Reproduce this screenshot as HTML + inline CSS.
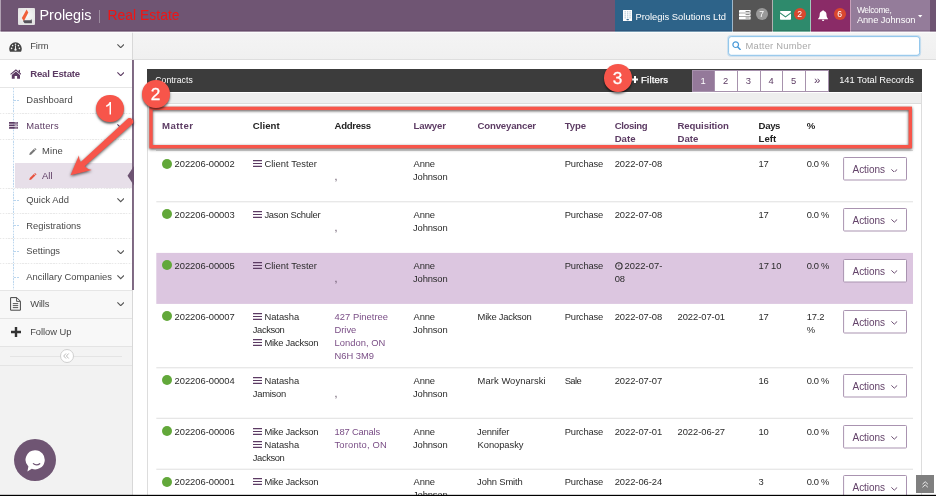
<!DOCTYPE html>
<html><head><meta charset="utf-8"><title>Prolegis - Real Estate</title>
<style>
html,body{margin:0;padding:0;}
body{width:936px;height:496px;overflow:hidden;position:relative;background:#fff;
font-family:"Liberation Sans",sans-serif;}
.b{position:absolute;display:block;}
.t{position:absolute;white-space:nowrap;display:block;}
#pg{position:absolute;left:0;top:0;width:936px;height:496px;overflow:hidden;will-change:transform;}
</style></head>
<body>
<div id="pg">
<div class="b" style="left:0.00px;top:0.00px;width:936.00px;height:32.00px;background:#6f5573;"></div>
<div class="b" style="left:17.80px;top:7.90px;width:17.25px;height:17.20px;background:radial-gradient(circle at 50% 45%,#fafafa 0%,#e6e6e6 70%,#dcdcdc 100%);border-radius:1px;"></div>
<svg class="b" style="left:17.80px;top:7.90px;" width="17.25" height="17.2" viewBox="0 0 17.25 17.2"><path d="M8.6 1.4 L10.3 4.5 L5.9 13.2 L3.8 9.9 Z" fill="#f0603a"/><path d="M5.6 12.3 H12.6 L13.2 11.1 L13.9 12.4 V15.3 H6.6 L5.2 13.4 Z" fill="#55525a"/></svg>
<span class="t" style="left:39.50px;top:6.30px;font-size:14.4px;line-height:18px;color:#fff;">Prolegis</span>
<div class="b" style="left:99.00px;top:9.60px;width:1.00px;height:13.40px;background:#9b8b9e;"></div>
<span class="t" style="left:107.50px;top:6.30px;font-size:13.9px;line-height:18px;color:#f01414;letter-spacing:0.017px;">Real Estate</span>
<div class="b" style="left:615.00px;top:0.00px;width:117.50px;height:32.00px;background:#2d6389;"></div>
<div class="b" style="left:732.50px;top:0.00px;width:40.00px;height:32.00px;background:#555555;"></div>
<div class="b" style="left:772.50px;top:0.00px;width:38.00px;height:32.00px;background:#2e8a6c;"></div>
<div class="b" style="left:810.50px;top:0.00px;width:40.00px;height:32.00px;background:#8a2b67;"></div>
<div class="b" style="left:850.50px;top:0.00px;width:79.00px;height:32.00px;background:#947c9a;"></div>
<div class="b" style="left:732.00px;top:0.00px;width:0.80px;height:32.00px;background:rgba(255,255,255,0.55);"></div>
<div class="b" style="left:772.30px;top:0.00px;width:0.80px;height:32.00px;background:rgba(255,255,255,0.55);"></div>
<div class="b" style="left:810.30px;top:0.00px;width:0.80px;height:32.00px;background:rgba(255,255,255,0.55);"></div>
<div class="b" style="left:850.30px;top:0.00px;width:0.80px;height:32.00px;background:rgba(255,255,255,0.55);"></div>
<svg class="b" style="left:622.80px;top:9.80px;" width="9.4" height="11.4" viewBox="0 0 9.4 11.4"><rect x="0" y="0" width="9.4" height="11.4" rx="0.3" fill="#fff"/><rect x="1.50" y="1.30" width="1.4" height="1.1" fill="#2d6389" opacity="0.38"/><rect x="1.50" y="3.30" width="1.4" height="1.1" fill="#2d6389" opacity="0.38"/><rect x="1.50" y="5.30" width="1.4" height="1.1" fill="#2d6389" opacity="0.38"/><rect x="1.50" y="7.30" width="1.4" height="1.1" fill="#2d6389" opacity="0.38"/><rect x="3.95" y="1.30" width="1.4" height="1.1" fill="#2d6389" opacity="0.38"/><rect x="3.95" y="3.30" width="1.4" height="1.1" fill="#2d6389" opacity="0.38"/><rect x="3.95" y="5.30" width="1.4" height="1.1" fill="#2d6389" opacity="0.38"/><rect x="3.95" y="7.30" width="1.4" height="1.1" fill="#2d6389" opacity="0.38"/><rect x="6.40" y="1.30" width="1.4" height="1.1" fill="#2d6389" opacity="0.38"/><rect x="6.40" y="3.30" width="1.4" height="1.1" fill="#2d6389" opacity="0.38"/><rect x="6.40" y="5.30" width="1.4" height="1.1" fill="#2d6389" opacity="0.38"/><rect x="6.40" y="7.30" width="1.4" height="1.1" fill="#2d6389" opacity="0.38"/><rect x="3.4" y="8.9" width="2.6" height="1.3" rx="0.6" fill="#2d6389" opacity="0.9"/></svg>
<span class="t" style="left:635.40px;top:9.80px;font-size:9.4px;line-height:13.0px;color:#fff;">Prolegis Solutions Ltd</span>
<svg class="b" style="left:739.30px;top:10.40px;" width="11.6" height="9.4" viewBox="0 0 11.6 9.4"><rect x="0" y="0.00" width="11.6" height="2.8" rx="0.5" fill="#fff"/><rect x="6.6" y="1.05" width="4" height="0.7" fill="#555"/><rect x="0" y="3.30" width="11.6" height="2.8" rx="0.5" fill="#fff"/><rect x="6.6" y="4.35" width="4" height="0.7" fill="#555"/><rect x="0" y="6.60" width="11.6" height="2.8" rx="0.5" fill="#fff"/><rect x="6.6" y="7.65" width="4" height="0.7" fill="#555"/></svg>
<div class="b" style="left:755.70px;top:7.80px;width:12.00px;height:12.00px;background:#999;border-radius:50%;"></div>
<span class="t" style="left:759.30px;top:7.60px;font-size:8.6px;line-height:13.0px;color:#fff;">7</span>
<svg class="b" style="left:780.00px;top:11.30px;" width="11" height="8.7" viewBox="0 0 11 8.7"><path d="M0 0.8 a0.8 0.8 0 0 1 0.8 -0.8 h9.4 a0.8 0.8 0 0 1 0.8 0.8 v0.4 l-5.5 4 l-5.5 -4 z" fill="#fff"/><path d="M0 2.5 l5.5 4 l5.5 -4 v5.4 a0.8 0.8 0 0 1 -0.8 0.8 h-9.4 a0.8 0.8 0 0 1 -0.8 -0.8 z" fill="#fff"/></svg>
<div class="b" style="left:793.60px;top:7.80px;width:12.00px;height:12.00px;background:#d9472e;border-radius:50%;"></div>
<span class="t" style="left:797.20px;top:7.60px;font-size:8.6px;line-height:13.0px;color:#fff;">2</span>
<svg class="b" style="left:818.20px;top:10.00px;" width="10.2" height="11" viewBox="0 0 10.2 11"><path d="M5.1 0.2 c0.5 0 0.8 0.3 0.8 0.8 c1.7 0.4 2.6 1.8 2.6 3.6 c0 2.3 0.7 3.4 1.6 4.2 v0.5 h-10 v-0.5 c0.9 -0.8 1.6 -1.9 1.6 -4.2 c0 -1.8 0.9 -3.2 2.6 -3.6 c0 -0.5 0.3 -0.8 0.8 -0.8 z" fill="#fff"/><path d="M3.9 9.7 h2.4 a1.2 1.2 0 0 1 -2.4 0 z" fill="#fff"/></svg>
<div class="b" style="left:833.60px;top:7.80px;width:12.00px;height:12.00px;background:#d9472e;border-radius:50%;"></div>
<span class="t" style="left:837.20px;top:7.60px;font-size:8.6px;line-height:13.0px;color:#fff;">6</span>
<span class="t" style="left:856.90px;top:3.70px;font-size:8.5px;line-height:13.0px;color:#fff;letter-spacing:-0.393px;">Welcome,</span>
<span class="t" style="left:856.90px;top:13.90px;font-size:9.3px;line-height:13.0px;color:#fff;letter-spacing:-0.079px;">Anne Johnson</span>
<svg class="b" style="left:918.40px;top:15.30px;" width="4.4" height="2.4" viewBox="0 0 4.4 2.4"><path d="M0 0h4.4l-2.2 2.4z" fill="#fff"/></svg>
<div class="b" style="left:0.00px;top:0.00px;width:1.00px;height:32.00px;background:rgba(255,255,255,0.45);"></div>
<div class="b" style="left:132.00px;top:31.50px;width:804.00px;height:28.00px;background:linear-gradient(#f4f4f4,#f0f0f0);border-bottom:1px solid #dedede;box-sizing:border-box;"></div>
<svg class="b" style="left:724.00px;top:32.00px;" width="200" height="28" viewBox="0 0 200 28"><rect x="4.6" y="4.6" width="191" height="18.7" rx="2.6" fill="none" stroke="rgba(102,175,233,.28)" stroke-width="3"/><rect x="4.6" y="4.6" width="191" height="18.7" rx="2.6" fill="#fff" stroke="#8cc3ea" stroke-width="1"/></svg>
<svg class="b" style="left:732.20px;top:40.70px;" width="9" height="9.4" viewBox="0 0 9 9.4"><circle cx="3.7" cy="3.7" r="2.8" fill="none" stroke="#4a9ad8" stroke-width="1.2"/><path d="M5.8 5.9 L8.2 8.5" stroke="#4a9ad8" stroke-width="1.45" stroke-linecap="round"/></svg>
<span class="t" style="left:745.40px;top:39.10px;font-size:9.4px;line-height:13.0px;color:#a9a9a9;letter-spacing:0.251px;">Matter Number</span>
<div class="b" style="left:0.00px;top:31.50px;width:132.00px;height:464.50px;background:#f2f2f2;"></div>
<div class="b" style="left:132.00px;top:31.50px;width:1.00px;height:464.50px;background:#d8d8d8;"></div>
<div class="b" style="left:0.00px;top:31.50px;width:132.00px;height:28.20px;background:#f8f8f8;border-bottom:1px solid #e0e0e0;box-sizing:border-box;"></div>
<div class="b" style="left:0.00px;top:59.20px;width:132.00px;height:231.00px;background:#fff;"></div>
<div class="b" style="left:0.00px;top:87.00px;width:132.00px;height:0.80px;background:#e6e6e6;"></div>
<div class="b" style="left:0.00px;top:59.00px;width:132.00px;height:1.00px;background:#e3e3e3;"></div>
<div class="b" style="left:14.50px;top:162.80px;width:117.50px;height:25.00px;background:#e7dfe9;"></div>
<div class="b" style="left:0.00px;top:290.00px;width:132.00px;height:29.00px;background:#f8f8f8;border-top:1px solid #e6e6e6;border-bottom:1px solid #e4e4e4;box-sizing:border-box;"></div>
<div class="b" style="left:0.00px;top:319.00px;width:132.00px;height:28.00px;background:#f8f8f8;border-bottom:1px solid #e4e4e4;box-sizing:border-box;"></div>
<div class="b" style="left:0.00px;top:347.00px;width:132.00px;height:19.00px;background:#f3f3f3;border-bottom:1px solid #e4e4e4;box-sizing:border-box;"></div>
<div class="b" style="left:10.00px;top:355.50px;width:112.00px;height:0.80px;background:#e4e4e4;"></div>
<div class="b" style="left:59.50px;top:348.80px;width:14.00px;height:14.00px;background:#fff;border:1px solid #d0d0d0;border-radius:50%;box-sizing:border-box;"></div>
<svg class="b" style="left:63.30px;top:352.80px;" width="6.4" height="6" viewBox="0 0 6.4 6"><path d="M3 0.5 L0.7 3 L3 5.5 M5.7 0.5 L3.4 3 L5.7 5.5" fill="none" stroke="#aaa" stroke-width="0.8"/></svg>
<div class="b" style="left:13px;top:87.8px;width:1px;height:202px;background:repeating-linear-gradient(180deg,#bdd7ee 0,#bdd7ee 1.4px,#e9f2fa 1.4px,#e9f2fa 2.8px);"></div>
<div class="b" style="left:0;top:112.7px;width:132px;height:1px;background:repeating-linear-gradient(90deg,#e9e9e9 0,#e9e9e9 1.4px,#f9f9f9 1.4px,#f9f9f9 2.8px);"></div>
<div class="b" style="left:0;top:138.5px;width:132px;height:1px;background:repeating-linear-gradient(90deg,#e9e9e9 0,#e9e9e9 1.4px,#f9f9f9 1.4px,#f9f9f9 2.8px);"></div>
<div class="b" style="left:0;top:187.5px;width:132px;height:1px;background:repeating-linear-gradient(90deg,#e9e9e9 0,#e9e9e9 1.4px,#f9f9f9 1.4px,#f9f9f9 2.8px);"></div>
<div class="b" style="left:0;top:212.7px;width:132px;height:1px;background:repeating-linear-gradient(90deg,#e9e9e9 0,#e9e9e9 1.4px,#f9f9f9 1.4px,#f9f9f9 2.8px);"></div>
<div class="b" style="left:0;top:237.8px;width:132px;height:1px;background:repeating-linear-gradient(90deg,#e9e9e9 0,#e9e9e9 1.4px,#f9f9f9 1.4px,#f9f9f9 2.8px);"></div>
<div class="b" style="left:0;top:263.3px;width:132px;height:1px;background:repeating-linear-gradient(90deg,#e9e9e9 0,#e9e9e9 1.4px,#f9f9f9 1.4px,#f9f9f9 2.8px);"></div>
<div class="b" style="left:14.00px;top:99.70px;width:2.00px;height:0.90px;background:#b9d5ee;"></div>
<div class="b" style="left:17.20px;top:99.70px;width:2.00px;height:0.90px;background:#b9d5ee;"></div>
<div class="b" style="left:14.00px;top:199.70px;width:2.00px;height:0.90px;background:#b9d5ee;"></div>
<div class="b" style="left:17.20px;top:199.70px;width:2.00px;height:0.90px;background:#b9d5ee;"></div>
<div class="b" style="left:14.00px;top:225.20px;width:2.00px;height:0.90px;background:#b9d5ee;"></div>
<div class="b" style="left:17.20px;top:225.20px;width:2.00px;height:0.90px;background:#b9d5ee;"></div>
<div class="b" style="left:14.00px;top:251.00px;width:2.00px;height:0.90px;background:#b9d5ee;"></div>
<div class="b" style="left:17.20px;top:251.00px;width:2.00px;height:0.90px;background:#b9d5ee;"></div>
<div class="b" style="left:14.00px;top:276.70px;width:2.00px;height:0.90px;background:#b9d5ee;"></div>
<div class="b" style="left:17.20px;top:276.70px;width:2.00px;height:0.90px;background:#b9d5ee;"></div>
<div class="b" style="left:14.50px;top:162.80px;width:117.50px;height:25.00px;background:#e7dfe9;"></div>
<div class="b" style="left:132.00px;top:60.00px;width:2.00px;height:230.00px;background:#6f5573;opacity:.86;"></div>
<svg class="b" style="left:126.50px;top:166.00px;" width="7" height="19.6" viewBox="0 0 7 19.6"><path d="M7 0 L0.5 9.8 L7 19.6 Z" fill="#6d5372"/></svg>
<svg class="b" style="left:9.00px;top:42.20px;" width="13" height="10" viewBox="0 0 13 10"><path d="M6.5 0.3 a6.3 6.3 0 0 1 6.3 6.3 c0 1.2 -0.3 2.2 -0.8 3.1 h-11 c-0.5 -0.9 -0.8 -1.9 -0.8 -3.1 a6.3 6.3 0 0 1 6.3 -6.3 z" fill="#444"/><circle cx="2.6" cy="6.4" r="0.8" fill="#f8f8f8"/><circle cx="3.6" cy="3.6" r="0.8" fill="#f8f8f8"/><circle cx="6.5" cy="2.3" r="0.8" fill="#f8f8f8"/><circle cx="9.4" cy="3.6" r="0.8" fill="#f8f8f8"/><circle cx="10.4" cy="6.4" r="0.8" fill="#f8f8f8"/><path d="M6.5 7.6 L6.5 3.4" stroke="#f8f8f8" stroke-width="0.9"/><circle cx="6.5" cy="7.7" r="1.15" fill="#f8f8f8"/></svg>
<span class="t" style="left:30.20px;top:39.10px;font-size:9.4px;line-height:13.0px;color:#484848;letter-spacing:-0.088px;">Firm</span>
<svg class="b" style="left:117.00px;top:44.00px;" width="7.4" height="4.4" viewBox="0 0 7.4 4.4"><path d="M0.4 0.4 L3.7 3.7 L7 0.4" fill="none" stroke="#555" stroke-width="1.1"/></svg>
<svg class="b" style="left:9.60px;top:69.20px;" width="11.8" height="9.8" viewBox="0 0 11.8 9.8"><path d="M5.9 0.2 L11.6 5 L10.9 5.8 L5.9 1.7 L0.9 5.8 L0.2 5 Z" fill="#5c3b63"/><path d="M5.9 2.6 L10 6 V9.7 H7.1 V6.9 H4.7 V9.7 H1.8 V6 Z" fill="#5c3b63"/><rect x="8.7" y="0.9" width="1.3" height="2.6" fill="#5c3b63"/></svg>
<span class="t" style="left:30.20px;top:66.55px;font-size:9.6px;line-height:13.0px;color:#5c3b63;font-weight:bold;letter-spacing:-0.176px;">Real Estate</span>
<svg class="b" style="left:117.00px;top:71.80px;" width="7.4" height="4.4" viewBox="0 0 7.4 4.4"><path d="M0.4 0.4 L3.7 3.7 L7 0.4" fill="none" stroke="#5c3b63" stroke-width="1.1"/></svg>
<span class="t" style="left:26.30px;top:92.80px;font-size:9.4px;line-height:13.0px;color:#484848;letter-spacing:0.069px;">Dashboard</span>
<svg class="b" style="left:8.90px;top:122.20px;" width="9.3" height="6.9" viewBox="0 0 9.3 6.9"><rect x="0" y="0.00" width="9.3" height="1.75" rx="0.3" fill="#5c3b63"/><rect x="5.6" y="0.55" width="2.9" height="0.65" fill="#fff" opacity="0.85"/><rect x="0" y="2.55" width="9.3" height="1.75" rx="0.3" fill="#5c3b63"/><rect x="5.6" y="3.10" width="2.9" height="0.65" fill="#fff" opacity="0.85"/><rect x="0" y="5.10" width="9.3" height="1.75" rx="0.3" fill="#5c3b63"/><rect x="5.6" y="5.65" width="2.9" height="0.65" fill="#fff" opacity="0.85"/></svg>
<span class="t" style="left:26.30px;top:119.30px;font-size:9.4px;line-height:13.0px;color:#5c3b63;letter-spacing:0.176px;">Matters</span>
<svg class="b" style="left:117.00px;top:124.10px;" width="7.4" height="4.4" viewBox="0 0 7.4 4.4"><path d="M0.4 0.4 L3.7 3.7 L7 0.4" fill="none" stroke="#5c3b63" stroke-width="1.1"/></svg>
<svg class="b" style="left:29.20px;top:147.60px;" width="7.4" height="7.4" viewBox="0 0 8.6 8.6"><path d="M0.3 8.3 L0.9 5.9 L5.6 1.2 L7.4 3 L2.7 7.7 Z" fill="#777"/><path d="M6.1 0.7 L6.6 0.2 a0.5 0.5 0 0 1 0.7 0 L8.4 1.3 a0.5 0.5 0 0 1 0 0.7 L7.9 2.5 Z" fill="#777"/></svg>
<span class="t" style="left:42.00px;top:144.30px;font-size:9.4px;line-height:13.0px;color:#484848;letter-spacing:0.168px;">Mine</span>
<svg class="b" style="left:29.20px;top:172.50px;" width="7.4" height="7.4" viewBox="0 0 8.6 8.6"><path d="M0.3 8.3 L0.9 5.9 L5.6 1.2 L7.4 3 L2.7 7.7 Z" fill="#e8533f"/><path d="M6.1 0.7 L6.6 0.2 a0.5 0.5 0 0 1 0.7 0 L8.4 1.3 a0.5 0.5 0 0 1 0 0.7 L7.9 2.5 Z" fill="#e8533f"/></svg>
<span class="t" style="left:42.00px;top:169.30px;font-size:9.4px;line-height:13.0px;color:#5c3b63;letter-spacing:0.026px;">All</span>
<span class="t" style="left:26.30px;top:193.00px;font-size:9.4px;line-height:13.0px;color:#484848;">Quick Add</span>
<svg class="b" style="left:117.00px;top:198.30px;" width="7.4" height="4.4" viewBox="0 0 7.4 4.4"><path d="M0.4 0.4 L3.7 3.7 L7 0.4" fill="none" stroke="#555" stroke-width="1.1"/></svg>
<span class="t" style="left:26.30px;top:218.80px;font-size:9.4px;line-height:13.0px;color:#484848;">Registrations</span>
<span class="t" style="left:26.30px;top:244.30px;font-size:9.4px;line-height:13.0px;color:#484848;letter-spacing:-0.022px;">Settings</span>
<svg class="b" style="left:117.00px;top:249.60px;" width="7.4" height="4.4" viewBox="0 0 7.4 4.4"><path d="M0.4 0.4 L3.7 3.7 L7 0.4" fill="none" stroke="#555" stroke-width="1.1"/></svg>
<span class="t" style="left:26.30px;top:269.90px;font-size:9.4px;line-height:13.0px;color:#484848;letter-spacing:0.013px;">Ancillary Companies</span>
<svg class="b" style="left:117.00px;top:275.30px;" width="7.4" height="4.4" viewBox="0 0 7.4 4.4"><path d="M0.4 0.4 L3.7 3.7 L7 0.4" fill="none" stroke="#555" stroke-width="1.1"/></svg>
<svg class="b" style="left:10.00px;top:297.40px;" width="11" height="13.8" viewBox="0 0 11 13.8"><path d="M0.6 0.6 H6.8 L10.4 4.2 V13.2 H0.6 Z" fill="none" stroke="#444" stroke-width="1"/><path d="M6.6 0.8 V4.4 H10.2" fill="none" stroke="#444" stroke-width="0.9"/><path d="M2.8 6.6 H8.2 M2.8 8.6 H8.2 M2.8 10.6 H8.2" stroke="#444" stroke-width="0.9"/></svg>
<span class="t" style="left:30.20px;top:297.30px;font-size:9.4px;line-height:13.0px;color:#484848;letter-spacing:-0.159px;">Wills</span>
<svg class="b" style="left:117.00px;top:302.10px;" width="7.4" height="4.4" viewBox="0 0 7.4 4.4"><path d="M0.4 0.4 L3.7 3.7 L7 0.4" fill="none" stroke="#555" stroke-width="1.1"/></svg>
<svg class="b" style="left:10.50px;top:326.80px;" width="10" height="10" viewBox="0 0 10 10"><path d="M3.8 0 H6.2 V3.8 H10 V6.2 H6.2 V10 H3.8 V6.2 H0 V3.8 H3.8 Z" fill="#333"/></svg>
<span class="t" style="left:30.20px;top:325.30px;font-size:9.4px;line-height:13.0px;color:#484848;letter-spacing:-0.043px;">Follow Up</span>
<div class="b" style="left:14.00px;top:438.50px;width:42.00px;height:42.00px;background:#6f5573;border-radius:50%;"></div>
<svg class="b" style="left:24.00px;top:448.50px;" width="22" height="24" viewBox="0 0 22 24"><path d="M11 1.2 a9.6 9.6 0 1 1 -3.2 18.6 L3.4 22.6 L4.4 17.6 A9.6 9.6 0 0 1 11 1.2 Z" fill="#fff"/><path d="M9.4 14.6 c1.6 1.7 4.6 1.7 6.3 0.1" fill="none" stroke="#6d5372" stroke-width="1.3" stroke-linecap="round"/></svg>
<div class="b" style="left:0.00px;top:30.00px;width:936.00px;height:1.00px;background:rgba(50,10,50,0.13);"></div>
<div class="b" style="left:0.00px;top:31.00px;width:936.00px;height:1.00px;background:rgba(250,250,250,0.36);"></div>
<div class="b" style="left:0.00px;top:32.00px;width:936.00px;height:1.00px;background:rgba(255,255,255,0.7);"></div>
<div class="b" style="left:147.00px;top:68.80px;width:774.60px;height:23.70px;background:#3c3c3c;"></div>
<div class="b" style="left:147.00px;top:92.50px;width:774.60px;height:11.80px;background:#eeeeee;border-bottom:1px solid #dcdcdc;box-sizing:border-box;"></div>
<div class="b" style="left:147.00px;top:92.50px;width:1.00px;height:496.00px;background:#dddddd;"></div>
<div class="b" style="left:920.80px;top:92.50px;width:1.00px;height:496.00px;background:#dddddd;"></div>
<span class="t" style="left:155.30px;top:73.80px;font-size:8.6px;line-height:13.0px;color:#fff;letter-spacing:0.080px;">Contracts</span>
<svg class="b" style="left:632.00px;top:75.80px;" width="6" height="7" viewBox="0 0 6 7"><path d="M2 0 H4 V2.5 H6 V4.5 H4 V7 H2 V4.5 H0 V2.5 H2 Z" fill="#fff"/></svg>
<span class="t" style="left:641.10px;top:73.10px;font-size:9.6px;line-height:13.0px;color:#fff;-webkit-text-stroke:0.25px #fff;letter-spacing:0.154px;">Filters</span>
<div class="b" style="left:691.60px;top:69.70px;width:23.67px;height:21.90px;background:#94799a;border:1px solid #a792ad;box-sizing:border-box;"></div>
<span class="t" style="left:700.44px;top:74.10px;font-size:9.4px;line-height:13.0px;color:#fff;">1</span>
<div class="b" style="left:714.27px;top:69.70px;width:23.67px;height:21.90px;background:#fff;border:1px solid #a792ad;box-sizing:border-box;"></div>
<span class="t" style="left:723.11px;top:74.10px;font-size:9.4px;line-height:13.0px;color:#5c3b63;">2</span>
<div class="b" style="left:736.94px;top:69.70px;width:23.67px;height:21.90px;background:#fff;border:1px solid #a792ad;box-sizing:border-box;"></div>
<span class="t" style="left:745.78px;top:74.10px;font-size:9.4px;line-height:13.0px;color:#5c3b63;">3</span>
<div class="b" style="left:759.61px;top:69.70px;width:23.67px;height:21.90px;background:#fff;border:1px solid #a792ad;box-sizing:border-box;"></div>
<span class="t" style="left:768.45px;top:74.10px;font-size:9.4px;line-height:13.0px;color:#5c3b63;">4</span>
<div class="b" style="left:782.28px;top:69.70px;width:23.67px;height:21.90px;background:#fff;border:1px solid #a792ad;box-sizing:border-box;"></div>
<span class="t" style="left:791.12px;top:74.10px;font-size:9.4px;line-height:13.0px;color:#5c3b63;">5</span>
<div class="b" style="left:804.95px;top:69.70px;width:23.67px;height:21.90px;background:#fff;border:1px solid #a792ad;box-sizing:border-box;"></div>
<span class="t" style="left:813.99px;top:73.80px;font-size:11.5px;line-height:13.0px;color:#5c3b63;">»</span>
<span class="t" style="left:839.20px;top:73.80px;font-size:9.3px;line-height:13.0px;color:#fff;">141 Total Records</span>
<span class="t" style="left:162.00px;top:118.85px;font-size:9.6px;line-height:13.0px;color:#5c3b63;font-weight:bold;letter-spacing:0.434px;">Matter</span>
<span class="t" style="left:252.80px;top:118.85px;font-size:9.6px;line-height:13.0px;color:#222;font-weight:bold;letter-spacing:0.057px;">Client</span>
<span class="t" style="left:334.50px;top:118.85px;font-size:9.6px;line-height:13.0px;color:#222;font-weight:bold;letter-spacing:-0.299px;">Address</span>
<span class="t" style="left:413.50px;top:118.85px;font-size:9.6px;line-height:13.0px;color:#5c3b63;font-weight:bold;letter-spacing:-0.113px;">Lawyer</span>
<span class="t" style="left:477.60px;top:118.85px;font-size:9.6px;line-height:13.0px;color:#5c3b63;font-weight:bold;letter-spacing:-0.179px;">Conveyancer</span>
<span class="t" style="left:564.70px;top:118.85px;font-size:9.6px;line-height:13.0px;color:#5c3b63;font-weight:bold;letter-spacing:-0.122px;">Type</span>
<span class="t" style="left:614.70px;top:118.85px;font-size:9.6px;line-height:13.0px;color:#5c3b63;font-weight:bold;letter-spacing:-0.355px;">Closing</span>
<span class="t" style="left:614.70px;top:131.95px;font-size:9.6px;line-height:13.0px;color:#5c3b63;font-weight:bold;">Date</span>
<span class="t" style="left:677.50px;top:118.85px;font-size:9.6px;line-height:13.0px;color:#5c3b63;font-weight:bold;letter-spacing:-0.094px;">Requisition</span>
<span class="t" style="left:677.50px;top:131.95px;font-size:9.6px;line-height:13.0px;color:#5c3b63;font-weight:bold;">Date</span>
<span class="t" style="left:758.60px;top:118.85px;font-size:9.6px;line-height:13.0px;color:#222;font-weight:bold;letter-spacing:-0.359px;">Days</span>
<span class="t" style="left:758.60px;top:131.95px;font-size:9.6px;line-height:13.0px;color:#222;font-weight:bold;letter-spacing:-0.023px;">Left</span>
<span class="t" style="left:806.70px;top:118.85px;font-size:9.6px;line-height:13.0px;color:#222;font-weight:bold;">%</span>
<div class="b" style="left:156.30px;top:150.20px;width:756.70px;height:1.20px;background:#dddddd;"></div>
<svg class="b" style="left:156.00px;top:250.00px;" width="758" height="56" viewBox="0 0 758 56"><rect x="0.3" y="2.9" width="756.7" height="51.0" fill="#dcc6e0"/></svg>
<svg class="b" style="left:156.00px;top:190.00px;" width="758" height="290" viewBox="0 0 758 290"><rect x="0.3" y="11.35" width="756.7" height="0.9" fill="#dcdcdc"/><rect x="0.3" y="177.35" width="756.7" height="0.9" fill="#dcdcdc"/><rect x="0.3" y="227.80" width="756.7" height="0.9" fill="#dcdcdc"/><rect x="0.3" y="278.75" width="756.7" height="0.9" fill="#dcdcdc"/></svg>
<div class="b" style="left:161.80px;top:158.50px;width:10.20px;height:10.20px;background:#62a83a;border-radius:50%;"></div>
<span class="t" style="left:174.60px;top:157.20px;font-size:9.4px;line-height:13.0px;color:#2b2b2b;letter-spacing:-0.040px;">202206-00002</span>
<svg class="b" style="left:252.80px;top:160.20px;" width="9" height="7" viewBox="0 0 9 7"><path d="M0 0.6 H9 M0 3.5 H9 M0 6.4 H9" stroke="#5c3b63" stroke-width="1.15"/></svg>
<span class="t" style="left:264.40px;top:157.20px;font-size:9.4px;line-height:13.0px;color:#2b2b2b;letter-spacing:0.051px;">Client Tester</span>
<span class="t" style="left:334.50px;top:170.20px;font-size:10.5px;line-height:13.0px;color:#5a4a5e;">,</span>
<span class="t" style="left:413.50px;top:157.20px;font-size:9.4px;line-height:13.0px;color:#2b2b2b;letter-spacing:-0.102px;">Anne</span>
<span class="t" style="left:413.00px;top:170.20px;font-size:9.4px;line-height:13.0px;color:#2b2b2b;letter-spacing:-0.136px;">Johnson</span>
<span class="t" style="left:564.70px;top:157.20px;font-size:9.4px;line-height:13.0px;color:#2b2b2b;letter-spacing:-0.139px;">Purchase</span>
<span class="t" style="left:614.70px;top:157.20px;font-size:9.4px;line-height:13.0px;color:#2b2b2b;letter-spacing:-0.047px;">2022-07-08</span>
<span class="t" style="left:758.60px;top:157.20px;font-size:9.4px;line-height:13.0px;color:#2b2b2b;letter-spacing:-0.219px;">17</span>
<span class="t" style="left:806.70px;top:157.20px;font-size:9.4px;line-height:13.0px;color:#2b2b2b;letter-spacing:-0.317px;">0.0 %</span>
<svg class="b" style="left:842.00px;top:156.20px;" width="66" height="26" viewBox="0 0 66 26"><rect x="1.6" y="1.5" width="62.9" height="22.5" rx="0.8" fill="#fff" stroke="#a993b0" stroke-width="1"/></svg>
<span class="t" style="left:852.50px;top:163.20px;font-size:10px;line-height:13.0px;color:#634269;letter-spacing:-0.028px;">Actions</span>
<svg class="b" style="left:891.20px;top:168.60px;" width="6.6" height="3.8" viewBox="0 0 6.6 3.8"><path d="M0.4 0.4 L3.3 3.2 L6.2 0.4" fill="none" stroke="#5c3b63" stroke-width="0.9"/></svg>
<div class="b" style="left:161.80px;top:209.30px;width:10.20px;height:10.20px;background:#62a83a;border-radius:50%;"></div>
<span class="t" style="left:174.60px;top:208.00px;font-size:9.4px;line-height:13.0px;color:#2b2b2b;letter-spacing:-0.040px;">202206-00003</span>
<svg class="b" style="left:252.80px;top:211.00px;" width="9" height="7" viewBox="0 0 9 7"><path d="M0 0.6 H9 M0 3.5 H9 M0 6.4 H9" stroke="#5c3b63" stroke-width="1.15"/></svg>
<span class="t" style="left:264.40px;top:208.00px;font-size:9.4px;line-height:13.0px;color:#2b2b2b;letter-spacing:-0.263px;">Jason Schuler</span>
<span class="t" style="left:334.50px;top:221.00px;font-size:10.5px;line-height:13.0px;color:#5a4a5e;">,</span>
<span class="t" style="left:413.50px;top:208.00px;font-size:9.4px;line-height:13.0px;color:#2b2b2b;letter-spacing:-0.102px;">Anne</span>
<span class="t" style="left:413.00px;top:221.00px;font-size:9.4px;line-height:13.0px;color:#2b2b2b;letter-spacing:-0.136px;">Johnson</span>
<span class="t" style="left:564.70px;top:208.00px;font-size:9.4px;line-height:13.0px;color:#2b2b2b;letter-spacing:-0.139px;">Purchase</span>
<span class="t" style="left:614.70px;top:208.00px;font-size:9.4px;line-height:13.0px;color:#2b2b2b;letter-spacing:-0.047px;">2022-07-08</span>
<span class="t" style="left:758.60px;top:208.00px;font-size:9.4px;line-height:13.0px;color:#2b2b2b;letter-spacing:-0.219px;">17</span>
<span class="t" style="left:806.70px;top:208.00px;font-size:9.4px;line-height:13.0px;color:#2b2b2b;letter-spacing:-0.317px;">0.0 %</span>
<svg class="b" style="left:842.00px;top:207.00px;" width="66" height="26" viewBox="0 0 66 26"><rect x="1.6" y="1.5" width="62.9" height="22.5" rx="0.8" fill="#fff" stroke="#a993b0" stroke-width="1"/></svg>
<span class="t" style="left:852.50px;top:214.00px;font-size:10px;line-height:13.0px;color:#634269;letter-spacing:-0.028px;">Actions</span>
<svg class="b" style="left:891.20px;top:219.40px;" width="6.6" height="3.8" viewBox="0 0 6.6 3.8"><path d="M0.4 0.4 L3.3 3.2 L6.2 0.4" fill="none" stroke="#5c3b63" stroke-width="0.9"/></svg>
<div class="b" style="left:161.80px;top:260.20px;width:10.20px;height:10.20px;background:#62a83a;border-radius:50%;"></div>
<span class="t" style="left:174.60px;top:258.90px;font-size:9.4px;line-height:13.0px;color:#2b2b2b;letter-spacing:-0.040px;">202206-00005</span>
<svg class="b" style="left:252.80px;top:261.90px;" width="9" height="7" viewBox="0 0 9 7"><path d="M0 0.6 H9 M0 3.5 H9 M0 6.4 H9" stroke="#5c3b63" stroke-width="1.15"/></svg>
<span class="t" style="left:264.40px;top:258.90px;font-size:9.4px;line-height:13.0px;color:#2b2b2b;letter-spacing:0.051px;">Client Tester</span>
<span class="t" style="left:334.50px;top:271.90px;font-size:10.5px;line-height:13.0px;color:#5a4a5e;">,</span>
<span class="t" style="left:413.50px;top:258.90px;font-size:9.4px;line-height:13.0px;color:#2b2b2b;letter-spacing:-0.102px;">Anne</span>
<span class="t" style="left:413.00px;top:271.90px;font-size:9.4px;line-height:13.0px;color:#2b2b2b;letter-spacing:-0.136px;">Johnson</span>
<span class="t" style="left:564.70px;top:258.90px;font-size:9.4px;line-height:13.0px;color:#2b2b2b;letter-spacing:-0.139px;">Purchase</span>
<span class="t" style="left:624.40px;top:258.90px;font-size:9.4px;line-height:13.0px;color:#2b2b2b;letter-spacing:0.059px;">2022-07-</span>
<span class="t" style="left:614.70px;top:271.90px;font-size:9.4px;line-height:13.0px;color:#2b2b2b;letter-spacing:-0.119px;">08</span>
<span class="t" style="left:758.60px;top:258.90px;font-size:9.4px;line-height:13.0px;color:#2b2b2b;letter-spacing:-0.174px;">17 10</span>
<span class="t" style="left:806.70px;top:258.90px;font-size:9.4px;line-height:13.0px;color:#2b2b2b;letter-spacing:-0.317px;">0.0 %</span>
<svg class="b" style="left:842.00px;top:257.90px;" width="66" height="26" viewBox="0 0 66 26"><rect x="1.6" y="1.5" width="62.9" height="22.5" rx="0.8" fill="#fff" stroke="#a993b0" stroke-width="1"/></svg>
<span class="t" style="left:852.50px;top:264.90px;font-size:10px;line-height:13.0px;color:#634269;letter-spacing:-0.028px;">Actions</span>
<svg class="b" style="left:891.20px;top:270.30px;" width="6.6" height="3.8" viewBox="0 0 6.6 3.8"><path d="M0.4 0.4 L3.3 3.2 L6.2 0.4" fill="none" stroke="#5c3b63" stroke-width="0.9"/></svg>
<svg class="b" style="left:614.90px;top:261.80px;" width="7.8" height="7.8" viewBox="0 0 7.8 7.8"><circle cx="3.9" cy="3.9" r="3.2" fill="none" stroke="#2b2b2b" stroke-width="1.1"/><path d="M3.9 2.4 V4.1 H2.9" fill="none" stroke="#2b2b2b" stroke-width="0.7"/></svg>
<div class="b" style="left:161.80px;top:311.00px;width:10.20px;height:10.20px;background:#62a83a;border-radius:50%;"></div>
<span class="t" style="left:174.60px;top:309.70px;font-size:9.4px;line-height:13.0px;color:#2b2b2b;letter-spacing:-0.040px;">202206-00007</span>
<svg class="b" style="left:252.80px;top:312.70px;" width="9" height="7" viewBox="0 0 9 7"><path d="M0 0.6 H9 M0 3.5 H9 M0 6.4 H9" stroke="#5c3b63" stroke-width="1.15"/></svg>
<span class="t" style="left:264.40px;top:309.70px;font-size:9.4px;line-height:13.0px;color:#2b2b2b;letter-spacing:-0.032px;">Natasha</span>
<span class="t" style="left:252.80px;top:322.70px;font-size:9.4px;line-height:13.0px;color:#2b2b2b;letter-spacing:-0.401px;">Jackson</span>
<svg class="b" style="left:252.80px;top:338.70px;" width="9" height="7" viewBox="0 0 9 7"><path d="M0 0.6 H9 M0 3.5 H9 M0 6.4 H9" stroke="#5c3b63" stroke-width="1.15"/></svg>
<span class="t" style="left:264.40px;top:335.70px;font-size:9.4px;line-height:13.0px;color:#2b2b2b;letter-spacing:-0.241px;">Mike Jackson</span>
<span class="t" style="left:334.50px;top:309.70px;font-size:9.4px;line-height:13.0px;color:#7a4e86;letter-spacing:0.036px;">427 Pinetree</span>
<span class="t" style="left:334.50px;top:322.70px;font-size:9.4px;line-height:13.0px;color:#7a4e86;letter-spacing:-0.018px;">Drive</span>
<span class="t" style="left:334.50px;top:335.70px;font-size:9.4px;line-height:13.0px;color:#7a4e86;letter-spacing:0.024px;">London, ON</span>
<span class="t" style="left:334.50px;top:348.70px;font-size:9.4px;line-height:13.0px;color:#7a4e86;letter-spacing:-0.016px;">N6H 3M9</span>
<span class="t" style="left:413.50px;top:309.70px;font-size:9.4px;line-height:13.0px;color:#2b2b2b;letter-spacing:-0.102px;">Anne</span>
<span class="t" style="left:413.00px;top:322.70px;font-size:9.4px;line-height:13.0px;color:#2b2b2b;letter-spacing:-0.136px;">Johnson</span>
<span class="t" style="left:477.60px;top:309.70px;font-size:9.4px;line-height:13.0px;color:#2b2b2b;letter-spacing:-0.241px;">Mike Jackson</span>
<span class="t" style="left:564.70px;top:309.70px;font-size:9.4px;line-height:13.0px;color:#2b2b2b;letter-spacing:-0.139px;">Purchase</span>
<span class="t" style="left:614.70px;top:309.70px;font-size:9.4px;line-height:13.0px;color:#2b2b2b;letter-spacing:-0.047px;">2022-07-08</span>
<span class="t" style="left:677.50px;top:309.70px;font-size:9.4px;line-height:13.0px;color:#2b2b2b;letter-spacing:-0.047px;">2022-07-01</span>
<span class="t" style="left:758.60px;top:309.70px;font-size:9.4px;line-height:13.0px;color:#2b2b2b;letter-spacing:-0.219px;">17</span>
<span class="t" style="left:806.70px;top:309.70px;font-size:9.4px;line-height:13.0px;color:#2b2b2b;letter-spacing:-0.188px;">17.2</span>
<span class="t" style="left:806.70px;top:322.70px;font-size:9.4px;line-height:13.0px;color:#2b2b2b;">%</span>
<svg class="b" style="left:842.00px;top:308.70px;" width="66" height="26" viewBox="0 0 66 26"><rect x="1.6" y="1.5" width="62.9" height="22.5" rx="0.8" fill="#fff" stroke="#a993b0" stroke-width="1"/></svg>
<span class="t" style="left:852.50px;top:315.70px;font-size:10px;line-height:13.0px;color:#634269;letter-spacing:-0.028px;">Actions</span>
<svg class="b" style="left:891.20px;top:321.10px;" width="6.6" height="3.8" viewBox="0 0 6.6 3.8"><path d="M0.4 0.4 L3.3 3.2 L6.2 0.4" fill="none" stroke="#5c3b63" stroke-width="0.9"/></svg>
<div class="b" style="left:161.80px;top:375.10px;width:10.20px;height:10.20px;background:#62a83a;border-radius:50%;"></div>
<span class="t" style="left:174.60px;top:373.80px;font-size:9.4px;line-height:13.0px;color:#2b2b2b;letter-spacing:-0.040px;">202206-00004</span>
<svg class="b" style="left:252.80px;top:376.80px;" width="9" height="7" viewBox="0 0 9 7"><path d="M0 0.6 H9 M0 3.5 H9 M0 6.4 H9" stroke="#5c3b63" stroke-width="1.15"/></svg>
<span class="t" style="left:264.40px;top:373.80px;font-size:9.4px;line-height:13.0px;color:#2b2b2b;letter-spacing:-0.032px;">Natasha</span>
<span class="t" style="left:252.80px;top:386.80px;font-size:9.4px;line-height:13.0px;color:#2b2b2b;letter-spacing:-0.260px;">Jamison</span>
<span class="t" style="left:334.50px;top:386.80px;font-size:10.5px;line-height:13.0px;color:#5a4a5e;">,</span>
<span class="t" style="left:413.50px;top:373.80px;font-size:9.4px;line-height:13.0px;color:#2b2b2b;letter-spacing:-0.102px;">Anne</span>
<span class="t" style="left:413.00px;top:386.80px;font-size:9.4px;line-height:13.0px;color:#2b2b2b;letter-spacing:-0.136px;">Johnson</span>
<span class="t" style="left:477.60px;top:373.80px;font-size:9.4px;line-height:13.0px;color:#2b2b2b;letter-spacing:0.069px;">Mark Woynarski</span>
<span class="t" style="left:564.70px;top:373.80px;font-size:9.4px;line-height:13.0px;color:#2b2b2b;letter-spacing:-0.566px;">Sale</span>
<span class="t" style="left:614.70px;top:373.80px;font-size:9.4px;line-height:13.0px;color:#2b2b2b;letter-spacing:-0.047px;">2022-07-07</span>
<span class="t" style="left:758.60px;top:373.80px;font-size:9.4px;line-height:13.0px;color:#2b2b2b;letter-spacing:-0.219px;">16</span>
<span class="t" style="left:806.70px;top:373.80px;font-size:9.4px;line-height:13.0px;color:#2b2b2b;letter-spacing:-0.317px;">0.0 %</span>
<svg class="b" style="left:842.00px;top:372.80px;" width="66" height="26" viewBox="0 0 66 26"><rect x="1.6" y="1.5" width="62.9" height="22.5" rx="0.8" fill="#fff" stroke="#a993b0" stroke-width="1"/></svg>
<span class="t" style="left:852.50px;top:379.80px;font-size:10px;line-height:13.0px;color:#634269;letter-spacing:-0.028px;">Actions</span>
<svg class="b" style="left:891.20px;top:385.20px;" width="6.6" height="3.8" viewBox="0 0 6.6 3.8"><path d="M0.4 0.4 L3.3 3.2 L6.2 0.4" fill="none" stroke="#5c3b63" stroke-width="0.9"/></svg>
<div class="b" style="left:161.80px;top:425.90px;width:10.20px;height:10.20px;background:#62a83a;border-radius:50%;"></div>
<span class="t" style="left:174.60px;top:424.60px;font-size:9.4px;line-height:13.0px;color:#2b2b2b;letter-spacing:-0.040px;">202206-00006</span>
<svg class="b" style="left:252.80px;top:427.60px;" width="9" height="7" viewBox="0 0 9 7"><path d="M0 0.6 H9 M0 3.5 H9 M0 6.4 H9" stroke="#5c3b63" stroke-width="1.15"/></svg>
<span class="t" style="left:264.40px;top:424.60px;font-size:9.4px;line-height:13.0px;color:#2b2b2b;letter-spacing:-0.241px;">Mike Jackson</span>
<svg class="b" style="left:252.80px;top:440.60px;" width="9" height="7" viewBox="0 0 9 7"><path d="M0 0.6 H9 M0 3.5 H9 M0 6.4 H9" stroke="#5c3b63" stroke-width="1.15"/></svg>
<span class="t" style="left:264.40px;top:437.60px;font-size:9.4px;line-height:13.0px;color:#2b2b2b;letter-spacing:-0.032px;">Natasha</span>
<span class="t" style="left:252.80px;top:450.60px;font-size:9.4px;line-height:13.0px;color:#2b2b2b;letter-spacing:-0.401px;">Jackson</span>
<span class="t" style="left:334.50px;top:424.60px;font-size:9.4px;line-height:13.0px;color:#7a4e86;letter-spacing:-0.194px;">187 Canals</span>
<span class="t" style="left:334.50px;top:437.60px;font-size:9.4px;line-height:13.0px;color:#7a4e86;letter-spacing:0.178px;">Toronto, ON</span>
<span class="t" style="left:413.50px;top:424.60px;font-size:9.4px;line-height:13.0px;color:#2b2b2b;letter-spacing:-0.102px;">Anne</span>
<span class="t" style="left:413.00px;top:437.60px;font-size:9.4px;line-height:13.0px;color:#2b2b2b;letter-spacing:-0.136px;">Johnson</span>
<span class="t" style="left:477.10px;top:424.60px;font-size:9.4px;line-height:13.0px;color:#2b2b2b;letter-spacing:-0.145px;">Jennifer</span>
<span class="t" style="left:477.60px;top:437.60px;font-size:9.4px;line-height:13.0px;color:#2b2b2b;letter-spacing:-0.066px;">Konopasky</span>
<span class="t" style="left:564.70px;top:424.60px;font-size:9.4px;line-height:13.0px;color:#2b2b2b;letter-spacing:-0.139px;">Purchase</span>
<span class="t" style="left:614.70px;top:424.60px;font-size:9.4px;line-height:13.0px;color:#2b2b2b;letter-spacing:-0.047px;">2022-07-01</span>
<span class="t" style="left:677.50px;top:424.60px;font-size:9.4px;line-height:13.0px;color:#2b2b2b;letter-spacing:-0.047px;">2022-06-27</span>
<span class="t" style="left:758.60px;top:424.60px;font-size:9.4px;line-height:13.0px;color:#2b2b2b;letter-spacing:-0.219px;">10</span>
<span class="t" style="left:806.70px;top:424.60px;font-size:9.4px;line-height:13.0px;color:#2b2b2b;letter-spacing:-0.317px;">0.0 %</span>
<svg class="b" style="left:842.00px;top:423.60px;" width="66" height="26" viewBox="0 0 66 26"><rect x="1.6" y="1.5" width="62.9" height="22.5" rx="0.8" fill="#fff" stroke="#a993b0" stroke-width="1"/></svg>
<span class="t" style="left:852.50px;top:430.60px;font-size:10px;line-height:13.0px;color:#634269;letter-spacing:-0.028px;">Actions</span>
<svg class="b" style="left:891.20px;top:436.00px;" width="6.6" height="3.8" viewBox="0 0 6.6 3.8"><path d="M0.4 0.4 L3.3 3.2 L6.2 0.4" fill="none" stroke="#5c3b63" stroke-width="0.9"/></svg>
<div class="b" style="left:161.80px;top:476.70px;width:10.20px;height:10.20px;background:#62a83a;border-radius:50%;"></div>
<span class="t" style="left:174.60px;top:475.40px;font-size:9.4px;line-height:13.0px;color:#2b2b2b;letter-spacing:-0.040px;">202206-00001</span>
<svg class="b" style="left:252.80px;top:478.40px;" width="9" height="7" viewBox="0 0 9 7"><path d="M0 0.6 H9 M0 3.5 H9 M0 6.4 H9" stroke="#5c3b63" stroke-width="1.15"/></svg>
<span class="t" style="left:264.40px;top:475.40px;font-size:9.4px;line-height:13.0px;color:#2b2b2b;letter-spacing:-0.241px;">Mike Jackson</span>
<span class="t" style="left:413.50px;top:475.40px;font-size:9.4px;line-height:13.0px;color:#2b2b2b;letter-spacing:-0.102px;">Anne</span>
<span class="t" style="left:413.00px;top:488.40px;font-size:9.4px;line-height:13.0px;color:#2b2b2b;letter-spacing:-0.136px;">Johnson</span>
<span class="t" style="left:477.10px;top:475.40px;font-size:9.4px;line-height:13.0px;color:#2b2b2b;letter-spacing:-0.141px;">John Smith</span>
<span class="t" style="left:564.70px;top:475.40px;font-size:9.4px;line-height:13.0px;color:#2b2b2b;letter-spacing:-0.139px;">Purchase</span>
<span class="t" style="left:614.70px;top:475.40px;font-size:9.4px;line-height:13.0px;color:#2b2b2b;letter-spacing:-0.047px;">2022-06-24</span>
<span class="t" style="left:758.60px;top:475.40px;font-size:9.4px;line-height:13.0px;color:#2b2b2b;">3</span>
<span class="t" style="left:806.70px;top:475.40px;font-size:9.4px;line-height:13.0px;color:#2b2b2b;letter-spacing:-0.317px;">0.0 %</span>
<svg class="b" style="left:842.00px;top:474.40px;" width="66" height="26" viewBox="0 0 66 26"><rect x="1.6" y="1.5" width="62.9" height="22.5" rx="0.8" fill="#fff" stroke="#a993b0" stroke-width="1"/></svg>
<span class="t" style="left:852.50px;top:481.40px;font-size:10px;line-height:13.0px;color:#634269;letter-spacing:-0.028px;">Actions</span>
<svg class="b" style="left:891.20px;top:486.80px;" width="6.6" height="3.8" viewBox="0 0 6.6 3.8"><path d="M0.4 0.4 L3.3 3.2 L6.2 0.4" fill="none" stroke="#5c3b63" stroke-width="0.9"/></svg>
<svg class="b" style="left:140.00px;top:100.00px;filter:drop-shadow(0 1.7px 1.5px rgba(0,0,0,.68));" width="780" height="56" viewBox="0 0 780 56"><rect x="11.00" y="8.35" width="759.30" height="38.35" fill="none" stroke="#f7554a" stroke-width="3.4" stroke-linejoin="miter"/></svg>
<svg class="b" style="left:60.00px;top:110.00px;filter:drop-shadow(0 1.7px 1.5px rgba(0,0,0,.68));" width="80" height="75" viewBox="0 0 80 75"><path d="M67.35 9 A3.5 3.5 0 0 1 72.05 14.19 L24.67 56.37 Q27.2 59.3 31.8 60 L10.5 65.3 L19 45.2 Q18.8 49.5 20.77 52.07 Z" fill="#f7554a"/></svg>
<div class="b" style="left:96.00px;top:94.55px;width:27.70px;height:27.70px;border-radius:50%;background:#f7554a;box-shadow:0 1.8px 2.2px rgba(0,0,0,.62);"></div>
<svg class="b" style="left:105.95px;top:102.30px;" width="5.5" height="12.4" viewBox="0 0 5.5 12.4"><path d="M3.55 0 H5.45 V12.4 H3.55 V3.0 C2.6 3.9 1.5 4.5 0.2 4.9 V3.3 C1.9 2.6 3.0 1.5 3.55 0 Z" fill="#fff"/></svg>
<div class="b" style="left:141.90px;top:79.85px;width:27.70px;height:27.70px;border-radius:50%;background:#f7554a;box-shadow:0 1.8px 2.2px rgba(0,0,0,.62);"></div>
<span class="t" style="left:150.85px;top:84.05px;font-size:17.2px;line-height:20px;color:#fff;-webkit-text-stroke:0.3px #fff;">2</span>
<div class="b" style="left:603.90px;top:63.90px;width:27.70px;height:27.70px;border-radius:50%;background:#f7554a;box-shadow:0 1.8px 2.2px rgba(0,0,0,.62);"></div>
<span class="t" style="left:612.85px;top:68.10px;font-size:17.2px;line-height:20px;color:#fff;-webkit-text-stroke:0.3px #fff;">3</span>
<div class="b" style="left:916.00px;top:475.20px;width:18.20px;height:17.80px;background:#7f7f7f;"></div>
<svg class="b" style="left:922.00px;top:480.60px;" width="6.4" height="7" viewBox="0 0 6.4 7"><path d="M0.5 3.2 L3.2 0.7 L5.9 3.2 M0.5 6.3 L3.2 3.8 L5.9 6.3" fill="none" stroke="#fff" stroke-width="0.85"/></svg>
<div class="b" style="left:0.00px;top:495.00px;width:936.00px;height:1.00px;background:#000;"></div>
<div class="b" style="left:0.00px;top:494.00px;width:936.00px;height:1.00px;background:rgba(0,0,0,0.18);"></div>
</div>
</body></html>
